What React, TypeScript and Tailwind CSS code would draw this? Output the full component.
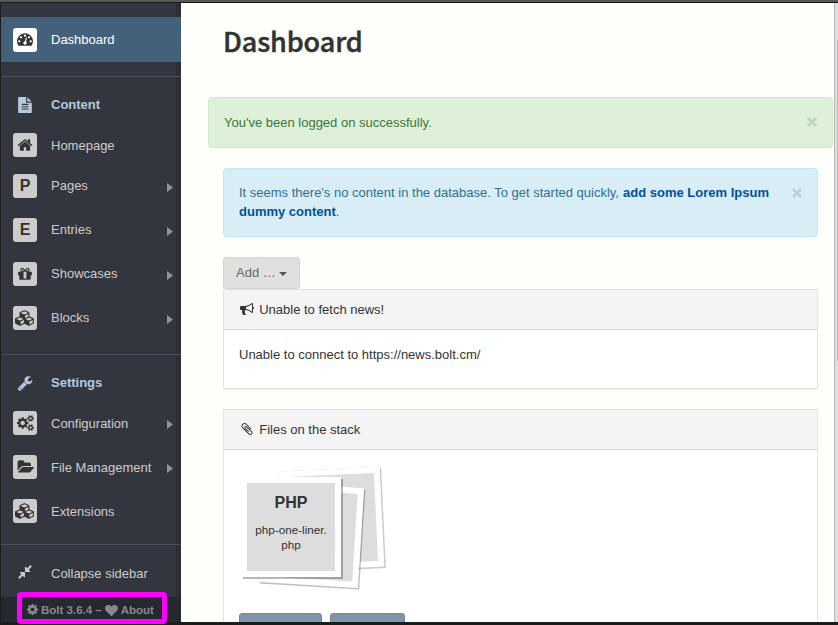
import type { ReactNode } from "react";

type Glyph = { w: number; d: string };

const icons: Record<string, Glyph> = {
  dashboard: { w: 1792, d: "M384 1152q0-53-37.5-90.5t-90.5-37.5-90.5 37.5-37.5 90.5 37.5 90.5 90.5 37.5 90.5-37.5 37.5-90.5zm192-448q0-53-37.5-90.5t-90.5-37.5-90.5 37.5-37.5 90.5 37.5 90.5 90.5 37.5 90.5-37.5 37.5-90.5zm428 481l101-382q6-26-7.5-48.5t-38.5-29.5-48 6.5-30 39.5l-101 382q-60 5-107 43.5t-63 98.5q-20 77 20 146t117 89 146-20 89-117q16-60-6-117t-72-91zm660-33q0-53-37.5-90.5t-90.5-37.5-90.5 37.5-37.5 90.5 37.5 90.5 90.5 37.5 90.5-37.5 37.5-90.5zm-640-640q0-53-37.5-90.5t-90.5-37.5-90.5 37.5-37.5 90.5 37.5 90.5 90.5 37.5 90.5-37.5 37.5-90.5zm448 192q0-53-37.5-90.5t-90.5-37.5-90.5 37.5-37.5 90.5 37.5 90.5 90.5 37.5 90.5-37.5 37.5-90.5zm320 448q0 261-141 483-19 29-54 29h-1402q-35 0-54-29-141-221-141-483 0-182 71-348t191-286 286-191 348-71 348 71 286 191 191 286 71 348z" },
  file: { w: 1792, d: "M1596 476q14 14 28 36h-472v-472q22 14 36 28zm-476 164h544v1056q0 40-28 68t-68 28h-1344q-40 0-68-28t-28-68v-1600q0-40 28-68t68-28h800v544q0 40 28 68t68 28zm160 736v-64q0-14-9-23t-23-9h-704q-14 0-23 9t-9 23v64q0 14 9 23t23 9h704q14 0 23-9t9-23zm0-256v-64q0-14-9-23t-23-9h-704q-14 0-23 9t-9 23v64q0 14 9 23t23 9h704q14 0 23-9t9-23zm0-256v-64q0-14-9-23t-23-9h-704q-14 0-23 9t-9 23v64q0 14 9 23t23 9h704q14 0 23-9t9-23z" },
  home: { w: 1792, d: "M1472 992v480q0 26-19 45t-45 19h-384v-384h-256v384h-384q-26 0-45-19t-19-45v-480q0-1 .5-3t.5-3l575-474 575 474q1 2 1 6zm223-69l-62 74q-8 9-21 11h-3q-13 0-21-7l-692-577-692 577q-12 8-24 7-13-2-21-11l-62-74q-8-10-7-23.5t11-21.5l719-599q32-26 76-26t76 26l244 204v-195q0-14 9-23t23-9h192q14 0 23 9t9 23v408l219 182q10 8 11 21.5t-7 23.5z" },
  gift: { w: 1792, d: "M1056 1356v-716h-320v716q0 25 18 38.5t46 13.5h192q28 0 46-13.5t18-38.5zm-456-844h195l-126-161q-26-31-69-31-40 0-68 28t-28 68 28 68 68 28zm688-96q0-40-28-68t-68-28q-43 0-69 31l-125 161h194q40 0 68-28t28-68zm376 256v320q0 14-9 23t-23 9h-96v416q0 40-28 68t-68 28h-1088q-40 0-68-28t-28-68v-416h-96q-14 0-23-9t-9-23v-320q0-14 9-23t23-9h440q-93 0-158.5-65.5t-65.5-158.5 65.5-158.5 158.5-65.5q107 0 168 77l128 165 128-165q61-77 168-77 93 0 158.5 65.5t65.5 158.5-65.5 158.5-158.5 65.5h440q14 0 23 9t9 23z" },
  cubes: { w: 2304, d: "M640 1632l384-192v-314l-384 164v342zm-64-454l404-173-404-173-404 173zm1088 454l384-192v-314l-384 164v342zm-64-454l404-173-404-173-404 173zm-448-293l384-165v-266l-384 164v267zm-64-379l441-189-441-189-441 189zm1088 518v416q0 36-19 67t-52 47l-448 224q-25 14-57 14t-57-14l-448-224q-4-2-7-4-2 2-7 4l-448 224q-25 14-57 14t-57-14l-448-224q-33-16-52-47t-19-67v-416q0-38 21.5-70t56.5-48l434-186v-400q0-38 21.5-70t56.5-48l448-192q23-10 50-10t50 10l448 192q35 16 56.5 48t21.5 70v400l434 186q36 16 57 48t21 70z" },
  wrench: { w: 1792, d: "M448 1472q0-26-19-45t-45-19-45 19-19 45 19 45 45 19 45-19 19-45zm644-420l-682 682q-37 37-90 37-52 0-91-37l-106-108q-38-36-38-90 0-53 38-91l681-681q39 98 114.5 173.5t173.5 114.5zm634-435q0 39-23 106-47 134-164.5 217.5t-258.5 83.5q-185 0-316.5-131.5t-131.5-316.5 131.5-316.5 316.5-131.5q58 0 121.5 16.5t107.5 46.5q16 11 16 28t-16 28l-293 169v224l193 107q5-3 79-48.5t135.5-81 70.5-35.5q15 0 23.5 10t8.5 25z" },
  cogs: { w: 1920, d: "M896 896q0-106-75-181t-181-75-181 75-75 181 75 181 181 75 181-75 75-181zm768 512q0-52-38-90t-90-38-90 38-38 90q0 53 37.5 90.5t90.5 37.5 90.5-37.5 37.5-90.5zm0-1024q0-52-38-90t-90-38-90 38-38 90q0 53 37.5 90.5t90.5 37.5 90.5-37.5 37.5-90.5zm-384 421v185q0 10-7 19.5t-16 10.5l-155 24q-11 35-32 76 34 48 90 115 7 11 7 20 0 12-7 19-23 30-82.5 89.5t-78.5 59.5q-11 0-21-7l-115-90q-37 19-77 31-11 108-23 155-7 24-30 24h-186q-11 0-20-7.5t-10-17.5l-23-153q-34-10-75-31l-118 89q-7 7-20 7-11 0-21-8-144-133-144-160 0-9 7-19 10-14 41-53t47-61q-23-44-35-82l-152-24q-10-1-17-9.5t-7-19.5v-185q0-10 7-19.5t16-10.5l155-24q11-35 32-76-34-48-90-115-7-11-7-20 0-12 7-20 22-30 82-89t79-59q11 0 21 7l115 90q34-18 77-32 11-108 23-154 7-24 30-24h186q11 0 20 7.5t10 17.5l23 153q34 10 75 31l118-89q8-7 20-7 11 0 21 8 144 133 144 160 0 8-7 19-12 16-42 54t-45 60q23 48 34 82l152 23q10 2 17 10.5t7 19.5zm640 533v140q0 16-149 31-12 27-30 52 51 113 51 138 0 4-4 7-122 71-124 71-8 0-46-47t-52-68q-20 2-30 2t-30-2q-14 21-52 68t-46 47q-2 0-124-71-4-3-4-7 0-25 51-138-18-25-30-52-149-15-149-31v-140q0-16 149-31 13-29 30-52-51-113-51-138 0-4 4-7 4-2 35-20t59-34 30-16q8 0 46 46.5t52 67.5q20-2 30-2t30 2q51-71 92-112l6-2q4 0 124 70 4 3 4 7 0 25-51 138 17 23 30 52 149 15 149 31zm0-1024v140q0 16-149 31-12 27-30 52 51 113 51 138 0 4-4 7-122 71-124 71-8 0-46-47t-52-68q-20 2-30 2t-30-2q-14 21-52 68t-46 47q-2 0-124-71-4-3-4-7 0-25 51-138-18-25-30-52-149-15-149-31v-140q0-16 149-31 13-29 30-52-51-113-51-138 0-4 4-7 4-2 35-20t59-34 30-16q8 0 46 46.5t52 67.5q20-2 30-2t30 2q51-71 92-112l6-2q4 0 124 70 4 3 4 7 0 25-51 138 17 23 30 52 149 15 149 31z" },
  folder: { w: 1943, d: "M1943 952q0 31-31 66l-336 396q-43 51-120.5 86.5t-143.5 35.5h-1088q-34 0-60.5-13t-26.5-43q0-31 31-66l336-396q43-51 120.5-86.5t143.5-35.5h1088q34 0 60.5 13t26.5 43zm-343-344v160h-832q-94 0-197 47.5t-164 119.5l-337 396-5 6q0-4-.5-12.5t-.5-12.5v-960q0-92 66-158t158-66h320q92 0 158 66t66 158v32h544q92 0 158 66t66 158z" },
  compress: { w: 1792, d: "M896 960v448q0 26-19 45t-45 19-45-19l-144-144-332 332q-10 10-23 10t-23-10l-114-114q-10-10-10-23t10-23l332-332-144-144q-19-19-19-45t19-45 45-19h448q26 0 45 19t19 45zm755-672q0 13-10 23l-332 332 144 144q19 19 19 45t-19 45-45 19h-448q-26 0-45-19t-19-45v-448q0-26 19-45t45-19 45 19l144 144 332-332q10-10 23-10t23 10l114 114q10 10 10 23z" },
  cog: { w: 1792, d: "M1152 896q0-106-75-181t-181-75-181 75-75 181 75 181 181 75 181-75 75-181zm512-109v222q0 12-8 23t-20 13l-185 28q-19 54-39 91 35 50 107 138 10 12 10 25t-9 23q-27 37-99 108t-94 71q-12 0-26-9l-138-108q-44 23-91 38-16 136-29 186-7 28-36 28h-222q-14 0-24.5-8.5t-11.5-21.5l-28-184q-49-16-90-37l-141 107q-10 9-25 9-14 0-25-11-126-114-165-168-7-10-7-23 0-12 8-23 15-21 51-66.5t54-70.5q-27-50-41-99l-183-27q-13-2-21-12.5t-8-23.5v-222q0-12 8-23t19-13l186-28q14-46 39-92-40-57-107-138-10-12-10-24 0-10 9-23 26-36 98.5-107.5t94.5-71.5q13 0 26 10l138 107q44-23 91-38 16-136 29-186 7-28 36-28h222q14 0 24.5 8.5t11.5 21.5l28 184q49 16 90 37l142-107q9-9 24-9 13 0 25 10 129 119 165 170 7 8 7 22 0 12-8 23-15 21-51 66.5t-54 70.5q26 50 41 98l183 28q13 2 21 12.5t8 23.5z" },
  heart: { w: 1792, d: "M896 1664q-26 0-44-18l-624-602q-10-8-27.5-26t-55.5-65.5-68-97.5-53.5-121-23.5-138q0-220 127-344t351-124q62 0 126.5 21.5t120 58 95.5 68.5 76 68q36-36 76-68t95.5-68.5 120-58 126.5-21.5q224 0 351 124t127 344q0 221-229 450l-623 600q-18 18-44 18z" },
  bullhorn: { w: 1792, d: "M1664 640q53 0 90.5 37.5t37.5 90.5-37.5 90.5-90.5 37.5v384q0 52-38 90t-90 38q-417-347-812-380-58 19-91 66t-31 100.5 40 92.5q-20 33-23 65.5t6 58 33.5 55 48 50 61.5 50.5q-29 58-111.5 83t-168.5 11.5-132-55.5q-7-23-29.5-87.5t-32-94.5-23-89-15-101 3.5-98.5 22-110.5h-122q-66 0-113-47t-47-113v-192q0-66 47-113t113-47h480q435 0 896-384 52 0 90 38t38 90v384zm-128 604v-954q-394 302-768 343v270q377 42 768 341z" },
  clip: { w: 1792, d: "M1596 1385q0 117-79 196t-196 79q-135 0-235-100l-777-776q-113-115-113-271 0-159 110-270t269-111q158 0 273 113l605 606q10 10 10 22 0 16-30.5 46.5t-46.5 30.5q-13 0-23-10l-606-607q-79-77-181-77-106 0-179 75t-73 181q0 105 76 181l776 777q63 63 145 63 64 0 106-42t42-106q0-82-63-145l-581-581q-26-24-60-24-29 0-48 19t-19 48q0 32 25 59l410 410q10 10 10 22 0 16-31 47t-47 31q-12 0-22-10l-410-410q-63-61-63-149 0-82 57-139t139-57q88 0 149 63l581 581q100 98 100 235z" },
};

function Icon({ name, className }: { name: string; className: string }) {
  const { w, d } = icons[name];
  return (
    <svg viewBox={`0 0 ${w} 1792`} fill="currentColor" className={`shrink-0 ${className}`}>
      <path d={d} />
    </svg>
  );
}

type ItemProps = { label: string; row: string; children: ReactNode; arrow?: boolean; active?: boolean; raised?: boolean };

function Item({ label, row, children, arrow, active, raised }: ItemProps) {
  return (
    <a className={`flex items-center pl-3 ${row} ${active ? "bg-[#44617b] text-white" : "text-[#ccc]"}`}>
      <span className={`flex size-6 items-center justify-center rounded-[3px] text-[#333] ${active ? "bg-white" : "bg-[#ccc]"}`}>
        {children}
      </span>
      <span className={`ml-3.5 flex-1 ${raised ? "mb-0.5" : ""}`}>{label}</span>
      {arrow && (
        <svg viewBox="0 0 6 10" className="mt-[3px] mr-2 h-[9px] w-1.5 fill-[#949494]" preserveAspectRatio="none">
          <path d="M0 0L6 5L0 10Z" />
        </svg>
      )}
    </a>
  );
}

function Section({ label, row, icon, raised }: { label: string; row: string; icon: string; raised?: boolean }) {
  return (
    <div className={`flex items-center pl-3 font-bold text-[#b2cbdd] ${row}`}>
      <span className="flex size-6 items-center justify-center">
        <Icon name={icon} className="size-4" />
      </span>
      <span className={`ml-3.5 ${raised ? "mb-0.5" : ""}`}>{label}</span>
    </div>
  );
}

function Letter({ children }: { children: string }) {
  return <b className="mb-px text-base leading-[23px] font-bold">{children}</b>;
}

function Close({ className }: { className: string }) {
  return (
    <svg viewBox="0 0 10 10" className={`size-2.5 shrink-0 ${className}`} fill="none" stroke="currentColor" strokeWidth="2.6">
      <path d="M1 1L9 9M9 1L1 9" />
    </svg>
  );
}

function Sidebar() {
  return (
    <nav className="flex w-[180px] flex-col bg-[linear-gradient(to_right,#34363f_175px,#2c2e36_175px)]">
      <div className="h-3.5" />
      <Item label="Dashboard" row="h-[45px]" active>
        <Icon name="dashboard" className="mb-px size-4" />
      </Item>
      <div className="mt-3.5 mb-[7px] h-px bg-[#4a4c57]" />
      <Section label="Content" row="h-[42px]" icon="file" raised />
      <Item label="Homepage" row="h-[38px]">
        <Icon name="home" className="size-4" />
      </Item>
      <Item label="Pages" row="h-11" arrow raised>
        <Letter>P</Letter>
      </Item>
      <Item label="Entries" row="h-11" arrow raised>
        <Letter>E</Letter>
      </Item>
      <Item label="Showcases" row="h-11" arrow raised>
        <Icon name="gift" className="mb-px size-4" />
      </Item>
      <Item label="Blocks" row="h-11" arrow raised>
        <Icon name="cubes" className="mb-px h-4 w-5" />
      </Item>
      <div className="mt-3.5 mb-[9px] h-px bg-[#4a4c57]" />
      <Section label="Settings" row="h-[37px]" icon="wrench" />
      <Item label="Configuration" row="h-11" arrow>
        <Icon name="cogs" className="h-4 w-[17px]" />
      </Item>
      <Item label="File Management" row="h-11" arrow>
        <Icon name="folder" className="h-4 w-[17px]" />
      </Item>
      <Item label="Extensions" row="h-11">
        <Icon name="cubes" className="h-4 w-5" />
      </Item>
      <div className="mt-[11px] h-px bg-[#4a4c57]" />
      <div className="flex h-[52px] items-center pt-1 pl-3 text-[#ccc]">
        <span className="flex size-6 items-center justify-center">
          <Icon name="compress" className="mb-[3px] size-4" />
        </span>
        <span className="ml-3.5">Collapse sidebar</span>
      </div>
      <div className="relative flex h-[25px] items-center bg-[#26282f] pt-0.5 pl-[25px] text-[11.5px] font-bold text-[#888]">
        <Icon name="cog" className="mb-0.5 size-[13px]" />
        <span className="ml-0.5">Bolt 3.6.4 –</span>
        <Icon name="heart" className="ml-[3px] size-[13px]" />
        <span className="ml-[3px]">About</span>
        <div className="absolute -top-[5px] left-4 h-8 w-[149.5px] rounded-[4px] border-[5px] border-[#ff00ff]" />
      </div>
    </nav>
  );
}

function PanelHead({ icon, children }: { icon: string; children: ReactNode }) {
  return (
    <div className="flex h-10 items-center border-b border-[#ddd] bg-[#f4f4f4] pl-4">
      <Icon name={icon} className="mb-0.5 size-3.5" />
      <span className="ml-[5.2px]">{children}</span>
    </div>
  );
}

function Stack() {
  return (
    <div className="relative h-[163px]">
      <div className="absolute top-[19px] left-[57.5px] size-[100px] rotate-[-2.7deg] border-[6px] border-white bg-[#ddd] shadow-[1.5px_1.5px_0_rgba(0,0,0,0.2),0_0_1px_rgba(0,0,0,0.1)]" />
      <div className="absolute top-[35px] left-[37px] size-[100px] rotate-[3.5deg] border-[6px] border-white bg-[#ddd] shadow-[1.5px_1.5px_0_rgba(0,0,0,0.25)]" />
      <div className="absolute top-[27px] left-[17px] size-[100px] border-[6px] border-white bg-[#ddd] text-center text-[11.7px] leading-[15px] shadow-[2px_2px_0_rgba(0,0,0,0.28)]">
        <div className="mt-2.5 mb-[9px] text-base leading-5 font-bold">PHP</div>
        php-one-liner.
        <br />
        php
      </div>
    </div>
  );
}

export default function App() {
  return (
    <div className="flex h-[625px] w-[838px] flex-col overflow-hidden bg-[#1b1d1d] font-['Liberation_Sans',Arial,sans-serif] text-[13px] leading-[19px] text-[#333]">
      <div className="h-0.5 shrink-0 bg-[#555858]" />
      <div className="mt-px flex h-[619px] pl-px">
        <Sidebar />
        <main className="h-[619px] w-[653px] overflow-hidden bg-[#fefffa]">
          <h1 className="mt-[15px] ml-[42px] h-[79px] font-['Noto_Sans_CJK_SC',sans-serif] text-[27px] leading-[45px] font-medium tracking-[-0.1px] [-webkit-text-stroke:0.5px_#333]">Dashboard</h1>
          <div className="mr-px ml-[27px] flex h-[51px] items-center justify-between rounded border border-[#d0e9c6] bg-[#dff0d8] pr-[15px] pl-[15px] text-[#3c763d]">
            You've been logged on successfully.
            <Close className="mb-0.5 text-[#bdd5b8]" />
          </div>
          <div className="mt-5 mr-4 ml-[42px] flex h-[69px] justify-between rounded border border-[#bce8f1] bg-[#d9edf7] pt-3.5 pr-[15px] pl-[15px] text-[#31708f]">
            <p>
              It seems there's no content in the database. To get started quickly, <b className="text-[#00519a]"><span className="ml-[0.5px]">add some Lorem Ipsum</span>
              <br />
              dummy content</b>.
            </p>
            <Close className="mt-[5px] text-[#b7d2df]" />
          </div>
          <div className="mt-5 mr-4 ml-[42px]">
            <button className="flex h-8 w-[77px] items-center rounded-[3px] border border-[#d4d4d4] bg-[#e0e0e0] pb-0.5 pl-3 text-[#666]">
              Add …
              <svg viewBox="0 0 8 4" className="mt-1 ml-[3px] h-1 w-2 fill-[#555]">
                <path d="M0 0H8L4 4Z" />
              </svg>
            </button>
            <section className="h-[100px] border border-[#e4e4e6] bg-white shadow-[0_1px_1px_rgba(0,0,0,0.05)]">
              <PanelHead icon="bullhorn">Unable to fetch news!</PanelHead>
              <p className="mt-[15px] ml-[15px]">Unable to connect to https://news.bolt.cm/</p>
            </section>
            <section className="mt-5 h-[300px] border border-[#e4e4e6] bg-white">
              <PanelHead icon="clip">Files on the stack</PanelHead>
              <Stack />
              <div className="flex gap-2 pl-[15px]">
                <div className="h-8 w-[83px] rounded-[3px] border border-[#71889d] bg-[#8094a5]" />
                <div className="h-8 w-[75px] rounded-[3px] border border-[#71889d] bg-[#8094a5]" />
              </div>
            </section>
          </div>
        </main>
        <div className="w-1 border-l border-[#b8b9b6] bg-[#dededd] pt-[37px]">
          <div className="ml-auto h-[321px] w-px bg-[#c0c0c0]" />
        </div>
      </div>
    </div>
  );
}
